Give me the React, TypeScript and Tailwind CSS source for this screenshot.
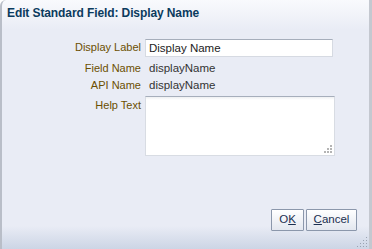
export default function App() {
  const rows = [
    { label: "Field Name", value: "displayName" },
    { label: "API Name", value: "displayName" },
  ];

  const grip = [
    [9, 0], [6, 3], [9, 3], [3, 6], [6, 6], [9, 6], [0, 9], [3, 9], [6, 9], [9, 9],
  ];

  return (
    <div
      className="relative w-[372px] h-[249px] flex flex-col bg-[linear-gradient(to_bottom,#f9fafd_0px,#e9ecf5_30px,#e9ecf5_226px,#ccd5e5_249px)] border-l-[2px] border-r-[3px] border-l-[#b9bec8] border-r-[#c4c8d0] rounded-tl-[6px] overflow-hidden"
      style={{ fontFamily: '"Liberation Sans", Arial, sans-serif' }}
    >
      {/* Title */}
      <div className="h-[26px] pl-[5px] pt-[5px] text-[12px] tracking-[-0.1px] font-bold text-[#0b3b5e] leading-[16px]">
        Edit Standard Field: Display Name
      </div>

      {/* Form */}
      <div className="flex-1 pt-[12px] text-[11px]">
        <div className="flex items-center h-[19px]">
          <div className="w-[143px] text-right pr-[4px] text-[#6b4f00]">Display Label</div>
          <div className="w-[188px] h-[18px] bg-white border border-[#d6dae2] border-t-[#a6aebb] pl-[3px] leading-[16px] text-[#222] text-[11.5px]">
            Display Name
          </div>
        </div>
        <div className="mt-[3px]">
          {rows.map((r) => (
            <div key={r.label} className="flex items-center h-[17px]">
              <div className="w-[143px] text-right pr-[4px] text-[#6b4f00]">{r.label}</div>
              <div className="pl-[4px] text-[#333] text-[11.5px]">{r.value}</div>
            </div>
          ))}
        </div>
        <div className="flex mt-[2px]">
          <div className="w-[143px] text-right pr-[4px] text-[#6b4f00] pt-[1px]">Help Text</div>
          <div className="relative w-[190px] h-[60px] bg-white border border-[#d8dce3] border-t-[#a6aebb]">
            <div className="h-[3px] bg-gradient-to-b from-[#eef0f2] to-white" />
            <svg className="absolute right-[2px] bottom-[2px]" width="10" height="10" viewBox="0 0 10 10">
              <rect x="8" y="2" width="2" height="2" fill="#b4b4b4" />
              <rect x="5" y="5" width="2" height="2" fill="#b4b4b4" />
              <rect x="8" y="5" width="2" height="2" fill="#b4b4b4" />
              <rect x="2" y="8" width="2" height="2" fill="#b4b4b4" />
              <rect x="5" y="8" width="2" height="2" fill="#b4b4b4" />
              <rect x="8" y="8" width="2" height="2" fill="#b4b4b4" />
            </svg>
          </div>
        </div>
      </div>

      {/* Buttons */}
      <div className="flex justify-end gap-[2px] pr-[12px] h-[22px] mb-[18px] text-[11.5px]">
        <button className="w-[33px] h-[22px] border border-[#8b97ab] bg-gradient-to-b from-white to-[#e3e7ef] text-[#1b2f50] rounded-[1px]">
          O<span className="underline">K</span>
        </button>
        <button className="w-[51px] h-[22px] border border-[#8b97ab] bg-gradient-to-b from-white to-[#e3e7ef] text-[#1b2f50] rounded-[1px]">
          <span className="underline">C</span>ancel
        </button>
      </div>

      {/* Resize grip */}
      <svg className="absolute right-[2px] bottom-[2px]" width="10" height="10" viewBox="0 0 10 10">
        {grip.map(([x, y], i) => (
          <rect key={i} x={x} y={y} width="1" height="1" fill="#9aa3b2" />
        ))}
      </svg>
    </div>
  );
}
